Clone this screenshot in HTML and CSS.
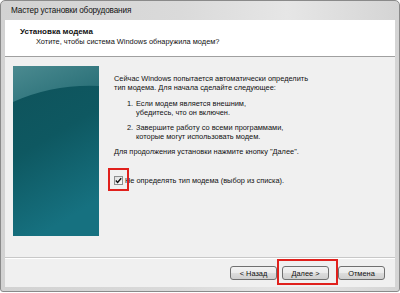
FILE: index.html
```html
<!DOCTYPE html>
<html lang="ru">
<head>
    <meta charset="UTF-8">
    <title>Мастер установки оборудования</title>
    <link rel="stylesheet" href="styles.css">
</head>
<body>
    <div class="window">
        <div class="titlebar">Мастер установки оборудования</div>
        <div class="client">
            <div class="header">
                <div class="header-title">Установка модема</div>
                <div class="header-sub">Хотите, чтобы система Windows обнаружила модем?</div>
            </div>
            <div class="content">
                <div class="banner">
                    <svg width="86" height="170" viewBox="0 0 86 170">
                        <defs>
                            <linearGradient id="base" x1="0" y1="0" x2="0.3" y2="1">
                                <stop offset="0" stop-color="#0f525a"/>
                                <stop offset="0.5" stop-color="#0e5861"/>
                                <stop offset="1" stop-color="#167180"/>
                            </linearGradient>
                            <linearGradient id="glow" x1="0" y1="0" x2="1" y2="1">
                                <stop offset="0" stop-color="#4b8a90"/>
                                <stop offset="1" stop-color="#226a72"/>
                            </linearGradient>
                        </defs>
                        <rect width="86" height="170" fill="url(#base)"/>
                        <path d="M0 0 H86 V20 Q40 18 0 36 Z" fill="url(#glow)"/>
                    </svg>
                </div>
                <div class="text">
                    <p>Сейчас Windows попытается автоматически определить<br>тип модема. Для начала сделайте следующее:</p>
                    <ol class="steps">
                        <li><span class="num">1.</span><span>Если модем является внешним,<br>убедитесь, что он включен.</span></li>
                        <li><span class="num">2.</span><span>Завершите работу со всеми программами,<br>которые могут использовать модем.</span></li>
                    </ol>
                    <p>Для продолжения установки нажмите кнопку "Далее".</p>
                    <label class="check">
                        <span class="box">
                            <svg width="7" height="7" viewBox="0 0 7 7"><path d="M0.8 3.6 L2.6 5.4 L6.2 1.2" fill="none" stroke="#111" stroke-width="1.4"/></svg>
                        </span>
                        Не определять тип модема (выбор из списка).
                    </label>
                </div>
            </div>
            <div class="footer">
                <button class="btn">&lt; Назад</button>
                <button class="btn">Далее &gt;</button>
                <button class="btn btn-cancel">Отмена</button>
            </div>
        </div>
        <div class="mark mark-check"></div>
        <div class="mark mark-next"></div>
    </div>
</body>
</html>
```

FILE: styles.css
```css
body {
    margin: 0;
    background: #fff;
    font-family: "Liberation Sans", Arial, sans-serif;
    font-size: 7.4px;
    color: #111;
}
.window {
    position: relative;
    width: 400px;
    height: 292px;
    box-sizing: border-box;
    border: 1px solid #8a8a8a;
    border-radius: 5px 5px 3px 3px;
    padding: 0 4px 4px 4px;
    background: linear-gradient(to right, #d2d2d2 0%, #dadada 45%, #e6e6e6 72%, #dedede 85%, #d4d4d4 100%);
    display: flex;
    flex-direction: column;
}
.titlebar {
    height: 19px;
    line-height: 20px;
    padding-left: 6px;
    font-size: 8.2px;
    letter-spacing: -0.15px;
    color: #111;
}
.client {
    flex: 1;
    display: flex;
    flex-direction: column;
    background: #f0f0f0;
}
.header {
    height: 37px;
    box-sizing: border-box;
    background: #fff;
    border-bottom: 1px solid #a0a0a0;
    padding: 7px 0 0 15px;
    line-height: 10px;
}
.header-title {
    font-weight: bold;
    font-size: 8px;
}
.header-sub {
    padding-left: 16px;
}
.content {
    flex: 1;
    display: flex;
    padding: 9px 8px 0 8px;
    gap: 15px;
}
.banner svg {
    display: block;
}
.text {
    padding-top: 8px;
    line-height: 9px;
}
.text p {
    margin: 0 0 7px 0;
}
.steps {
    list-style: none;
    margin: 0 0 6px 0;
    padding: 0;
}
.steps li {
    display: flex;
    margin-bottom: 6px;
}
.steps .num {
    width: 9px;
    margin-left: 13px;
}
.check {
    display: flex;
    align-items: center;
    gap: 2px;
    margin-top: 20px;
}
.check .box {
    width: 9px;
    height: 9px;
    box-sizing: border-box;
    border: 1px solid #8e8f8f;
    background: linear-gradient(135deg, #dedede, #fbfbfb);
    display: flex;
    align-items: center;
    justify-content: center;
}
.check .box svg {
    display: block;
}
.footer {
    height: 30px;
    box-sizing: border-box;
    border-top: 1px solid #c8c8c8;
    box-shadow: inset 0 1px 0 #fff;
    display: flex;
    justify-content: flex-end;
    align-items: flex-start;
    padding: 8px 10px 0 0;
    gap: 5px;
}
.btn {
    width: 47px;
    height: 14px;
    padding: 0;
    border: 1px solid #707070;
    border-radius: 3px;
    background: linear-gradient(to bottom, #f2f2f2 0%, #ebebeb 50%, #dddddd 51%, #cfcfcf 100%);
    font-family: "Liberation Sans", Arial, sans-serif;
    font-size: 7.4px;
    color: #111;
}
.btn-cancel {
    margin-left: 4px;
}
.mark {
    position: absolute;
    box-sizing: border-box;
    border: 2px solid #e0201c;
}
.mark-check {
    left: 107px;
    top: 167px;
    width: 21px;
    height: 23px;
}
.mark-next {
    left: 276px;
    top: 258px;
    width: 61px;
    height: 26px;
}
```
